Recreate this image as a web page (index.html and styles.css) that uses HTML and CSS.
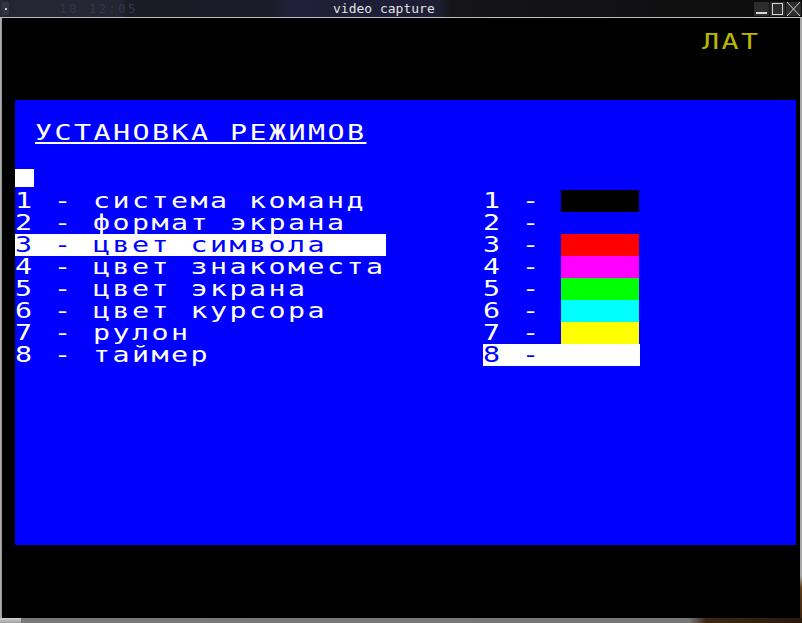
FILE: index.html
```html
<!DOCTYPE html>
<html lang="ru">
<head>
<meta charset="utf-8">
<title>video capture</title>
<link rel="stylesheet" href="styles.css">
</head>
<body>
<div class="window">
  <div class="titlebar">
    <div class="tb-left">
      <span class="menu-btn"><span class="dot"></span></span>
      <span class="ghost">18 12:05</span>
    </div>
    <div class="tb-title">video capture</div>
    <div class="tb-buttons">
      <span class="tb-btn">
        <svg width="15" height="14" viewBox="0 0 15 14"><rect x="2" y="10" width="11" height="2" fill="#d4d4d4"/></svg>
      </span>
      <span class="tb-btn">
        <svg width="15" height="14" viewBox="0 0 15 14"><rect x="2.5" y="1.5" width="10" height="11" fill="none" stroke="#d4d4d4" stroke-width="1"/></svg>
      </span>
      <span class="tb-btn">
        <svg width="15" height="14" viewBox="0 0 15 14"><path d="M1 0 L14 14 M14 0 L1 14" stroke="#d4d4d4" stroke-width="1" fill="none"/></svg>
      </span>
    </div>
  </div>
  <div class="body">
    <div class="lborder"></div>
    <div class="canvas">
      <div class="lat"><span class="ln">ЛАТ</span></div>
      <div class="screen">
        <div class="title"><span class="ln u">УСТАНОВКА РЕЖИМОВ</span></div>
        <div class="cursor-row"><span class="cursor"></span></div>
        <div class="cols">
          <div class="left">
            <div class="row"><span class="ln">1 - система команд</span></div>
            <div class="row"><span class="ln">2 - формат экрана</span></div>
            <div class="row hl"><span class="ln">3 - цвет символа</span></div>
            <div class="row"><span class="ln">4 - цвет знакоместа</span></div>
            <div class="row"><span class="ln">5 - цвет экрана</span></div>
            <div class="row"><span class="ln">6 - цвет курсора</span></div>
            <div class="row"><span class="ln">7 - рулон</span></div>
            <div class="row"><span class="ln">8 - таймер</span></div>
          </div>
          <div class="right">
            <div class="rrow"><span class="lab"><span class="ln">1 -</span></span><span class="sw c-black"></span></div>
            <div class="rrow"><span class="lab"><span class="ln">2 -</span></span></div>
            <div class="rrow"><span class="lab"><span class="ln">3 -</span></span><span class="sw c-red"></span></div>
            <div class="rrow"><span class="lab"><span class="ln">4 -</span></span><span class="sw c-magenta"></span></div>
            <div class="rrow"><span class="lab"><span class="ln">5 -</span></span><span class="sw c-green"></span></div>
            <div class="rrow"><span class="lab"><span class="ln">6 -</span></span><span class="sw c-cyan"></span></div>
            <div class="rrow"><span class="lab"><span class="ln">7 -</span></span><span class="sw c-yellow"></span></div>
            <div class="rrow hl8"><span class="lab"><span class="ln">8 -</span></span></div>
          </div>
        </div>
      </div>
    </div>
    <div class="rborder"></div>
  </div>
  <div class="bottom"><span class="grip"></span></div>
</div>
</body>
</html>
```
FILE: styles.css
```css
html, body {
  margin: 0;
  padding: 0;
  background: #000;
}
body {
  width: 802px;
  height: 623px;
  overflow: hidden;
}
.window {
  width: 802px;
  height: 623px;
  display: flex;
  flex-direction: column;
}

/* title bar */
.titlebar {
  height: 17px;
  border-bottom: 1px solid #bdbdbd;
  display: flex;
  font-family: "DejaVu Sans Mono", monospace;
  background: linear-gradient(to right,
    #2a2a3a 0px, #232331 9px, #262635 18px, #252534 120px,
    #1b1b26 128px, #1c1c28 270px, #20203a 290px, #1d1d34 440px,
    #151519 450px, #121214 600px, #0c0c0c 802px);
}
.tb-left {
  width: 333px;
  display: flex;
  align-items: center;
  gap: 12px;
  padding-left: 2px;
  box-sizing: border-box;
}
.menu-btn {
  width: 7px;
  height: 13px;
  background: #34343f;
  display: flex;
  align-items: center;
  justify-content: center;
}
.dot {
  width: 2px;
  height: 2px;
  background: #c8c8d0;
}
.ghost {
  margin-left: 38px;
  font-size: 13px;
  color: #33334a;
  letter-spacing: 2px;
}
.tb-title {
  flex: 1;
  color: #e4e4e4;
  font-size: 13px;
  line-height: 17px;
}
.tb-buttons {
  display: flex;
  gap: 1px;
  padding: 2px 1px 0 0;
}
.tb-btn {
  width: 15px;
  height: 14px;
  background: #2c2c2c;
  display: block;
}
.tb-btn svg {
  display: block;
}

/* body */
.body {
  height: 600px;
  display: flex;
}
.lborder {
  width: 2px;
  background: linear-gradient(to right, #b8b8b8, #8a8a8a);
}
.rborder {
  width: 2px;
  background: linear-gradient(#a8a8a8 0, #a8a8a8 93%, #5a3a18 95%, #3a240e 100%);
}
.canvas {
  flex: 1;
  background: #000;
  padding-top: 13px;
}

/* text of the emulated screen */
.lat, .screen {
  font-family: "DejaVu Sans Mono", monospace;
  font-size: 21px;
  line-height: 22px;
}
.ln {
  display: inline-block;
  white-space: pre;
  letter-spacing: 1.8px;
  transform: scaleX(1.35);
  transform-origin: 0 0;
  vertical-align: top;
}
.lat {
  height: 22px;
  padding-left: 700px;
  color: #b8b800;
}
.screen {
  margin: 47px 0 0 13px;
  width: 781px;
  height: 445px;
  box-sizing: border-box;
  background: #0000ff;
  color: #fff;
  padding-top: 22px;
}
.title {
  height: 22px;
  padding-left: 19.5px;
}
.u {
  text-decoration: underline;
  text-decoration-thickness: 2px;
  text-underline-offset: 2px;
  text-decoration-skip-ink: none;
}
.cursor-row {
  height: 22px;
  margin-top: 24px;
  padding-top: 1px;
  box-sizing: border-box;
}
.cursor {
  display: block;
  width: 19px;
  height: 18px;
  background: #fff;
}
.cols {
  display: flex;
}
.left {
  width: 468px;
}
.row {
  height: 22px;
}
.hl {
  width: 371px;
  background: #fff;
  color: #0000ff;
}
.rrow {
  height: 22px;
  display: flex;
}
.lab {
  width: 78px;
  height: 22px;
}
.sw {
  width: 78px;
  height: 22px;
}
.hl8 {
  width: 157px;
  background: #fff;
  color: #0000ff;
}
.c-black { background: #000; }
.c-red { background: #ff0000; }
.c-magenta { background: #ff00ff; }
.c-green { background: #00ff00; }
.c-cyan { background: #00ffff; }
.c-yellow { background: #ffff00; }

/* bottom strip */
.bottom {
  height: 5px;
  display: flex;
  background: linear-gradient(to right, #7a7a7a 0, #767676 86%, #3e2812 88%, #2a1a0a 100%);
}
.grip {
  width: 21px;
  background: linear-gradient(#d0d0d0, #a0a0a0);
}
```
